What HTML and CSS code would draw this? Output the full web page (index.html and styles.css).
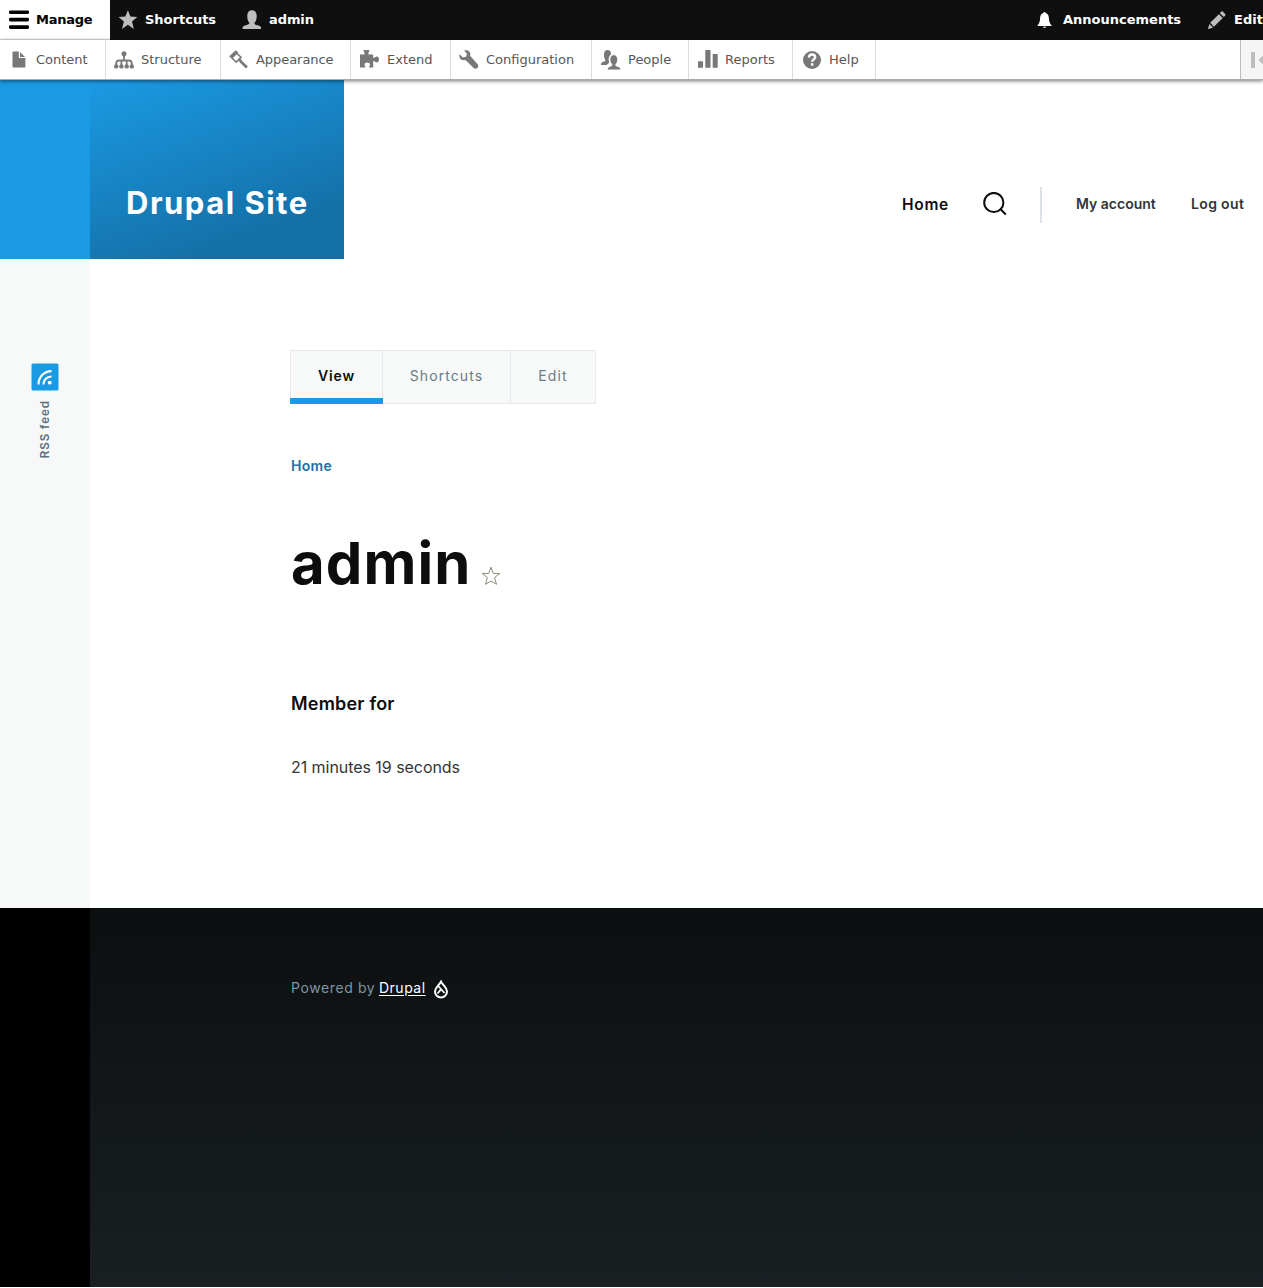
FILE: index.html
```html
<!DOCTYPE html>
<html lang="en">
<head>
<meta charset="utf-8">
<title>admin | Drupal Site</title>
<link rel="stylesheet" href="styles.css">
</head>
<body>
<nav class="bar">
  <a class="tab tab-manage"><svg width="20" height="20" viewBox="0 0 20 20"><g fill="#000"><rect y=".4" width="20" height="3.700" rx="1.4"/><rect y="7.800" width="20" height="3.700" rx="1.4"/><rect y="15.300" width="20" height="3.700" rx="1.4"/></g></svg><span>Manage</span></a>
  <a class="tab tab-shortcuts"><svg width="20" height="20" viewBox="0 0 20 20"><path fill="#bebebe" d="M9.900.3l2.500 6.300 6.900.4-5.300 4.400 1.800 7.600-5.900-4.200L4 19l1.900-7.600L.6 7l6.800-.4z"/></svg><span>Shortcuts</span></a>
  <a class="tab tab-user"><svg width="20" height="20" viewBox="0 0 20 20"><path fill="#bebebe" d="M.5 19c0-2.600.8-3.300 3.400-3.800 2.500-.5 3.600-1.100 3.400-2.400C5.800 11.500 5.300 9 5.300 6c0-3.600 1.700-5.700 4.700-5.700s4.700 2.100 4.700 5.700c0 3-.7 5.500-2.200 6.800-.2 1.300.7 1.900 3.100 2.400 2.600.5 3.500 1.200 3.600 3.800z"/></svg><span>admin</span></a>
  <a class="tab tab-news"><svg width="16" height="20" viewBox="0 0 16 20"><path fill="#fff" d="M7.500 2c.7 0 1.100.4 1.200 1 2.100.6 3.100 2.300 3.200 5 .1 3.500 1 5.800 3 8H.2c2-2.200 2.800-4.500 2.900-8 .1-2.700 1.100-4.400 3.200-5 .1-.6.5-1 1.200-1zM5.800 16.800h3.500c-.3.800-.9 1.100-1.700 1.100s-1.500-.3-1.800-1.100z"/></svg><span>Announcements</span></a>
  <a class="tab tab-edit"><svg width="18" height="20" viewBox="0 0 18 20"><path fill="#bebebe" d="M13.200 1.800c.6-.6 1.200-.6 1.800 0l2.100 2.200c.6.600.6 1.200 0 1.800l-1.300 1.300L11.900 3.200zM10.900 4.200l3.900 3.900-8.900 8.600-3.700-3.900zM1.500 13.900l3.500 3.500-4.200 1.500c-.5.100-.8-.2-.7-.7z"/></svg><span>Edit</span></a>
</nav>
<nav class="tray">
  <a class="item"><svg viewBox="0 0 20 20"><path d="M5.200 1.500h5.600v6c0 .4.200.600.600.600h6v8.700q0 .7-.7.700H5.200q-.7 0-.7-.7V2.200q0-.7.700-.7zM12 2l5 5h-4.500q-.5 0-.5-.5z"/></svg><span>Content</span></a>
  <a class="item"><svg viewBox="0 0 20 20"><circle cx="10" cy="3.700" r="2.500"/><circle cx="2.200" cy="16.400" r="2.200"/><circle cx="7.400" cy="16.400" r="2.200"/><circle cx="12.700" cy="16.400" r="2.200"/><circle cx="17.800" cy="16.400" r="2.200"/><path fill="none" stroke="#787878" stroke-width="1.800" d="M10 5v5M2.200 16v-2.500q0-3 3-3h9.600q3 0 3 3V16M7.400 16v-5M12.700 16v-5"/></svg><span>Structure</span></a>
  <a class="item"><svg viewBox="0 0 20 20"><path fill-rule="evenodd" d="M6.800.3l2.600 2.300-.6.700 4.300 4-5.900 5.900L.2 6.300zM7.600 4.300L4 8l3.200 3L10.900 7.300z"/><path d="M9.300 10.200l2.200-2 1.200 2.200 6.200 6.200-2 2-6-6.100z"/></svg><span>Appearance</span></a>
  <a class="item"><svg viewBox="0 0 20 20"><path d="M4.500 0h6c.3 1.300-1.300 1.700-1 3v1.600h4.700V8c1.500.2 1.900-1.500 3.600-1.500 1.300 0 2.200 1.300 2.200 2.900S19.100 12.400 17.800 12.400c-1.700 0-2.100-1.700-3.600-1.400v6.500h-4c-.5-1 .8-1.500.8-3 0-1.200-1.200-2.100-2.800-2.100s-2.700.9-2.700 2.100c0 1.500 1.300 2 .8 3H1V4.600h4.400V3c.3-1.300-1.200-1.700-.9-3z"/></svg><span>Extend</span></a>
  <a class="item"><svg viewBox="0 0 20 20"><path d="M5.200.6c3.600-1.500 7.400 1.600 5.900 5.200l7.400 8.200c2.400 2.700-1.100 6.300-3.900 3.900L6.500 9.900C3 11.300-.7 8.300.500 4.300l3.400 3.200 3.200-.7.800-3z"/></svg><span>Configuration</span></a>
  <a class="item"><svg viewBox="0 0 20 20"><path d="M1 15c0-2.500 1-3 3-3.500 1.500-.4 1.600-1 1.200-2C4.400 8.500 4 7 4 5c0-3.300 1-5 3.500-5s3.700 1.600 3.500 4.300C8.600 6 8.200 9.200 9.100 11.700l-.2 1.300L6.500 15z"/><path stroke="#fff" stroke-width=".8" d="M7.300 19.900c0-2.300.9-3.200 3.500-3.700 1.400-.3 1.400-1.200.8-2.200-1-1-1.700-2.500-1.700-4.200 0-3 1.400-5 3.900-5s3.900 2 3.900 5c0 1.700-.7 3.200-1.700 4.200-.5 1-.5 1.900.9 2.200 2.600.5 3.800 1.400 3.800 3.700z"/></svg><span>People</span></a>
  <a class="item"><svg viewBox="0 0 20 20"><rect x="1" y="11.300" width="5" height="6.500" rx=".5"/><rect x="8.300" y="0" width="5.200" height="17.800" rx=".5"/><rect x="15.700" y="4" width="5" height="13.800" rx=".5"/></svg><span>Reports</span></a>
  <a class="item"><svg viewBox="0 0 20 20"><circle cx="11" cy="10" r="9"/><path fill="none" stroke="#fff" stroke-width="2.400" d="M7.900 7.600C8 5.600 9.300 4.500 11 4.500s3.200 1 3.200 2.700c0 2.200-3 2.200-3 4.600"/><rect x="9.900" y="13.200" width="2.500" height="2.500" fill="#fff"/></svg><span>Help</span></a>
  <button class="orient" aria-label="Toggle orientation"><svg width="22" height="20" viewBox="0 0 22 20"><path fill="#bebebe" d="M0 2h4v16H0zM7.500 10L14 3.500v4h8v5h-8v4z"/></svg></button>
</nav>
<header class="header">
  <div class="edge"></div>
  <a class="brand"><span>Drupal Site</span></a>
  <nav class="nav">
    <a class="nav-home">Home</a>
    <svg class="search" width="24" height="24" viewBox="0 0 24 24"><g fill="none" stroke="#0d0d0d" stroke-width="2"><circle cx="10.800" cy="10.500" r="9.600"/><path d="M17.600 17.300l5.200 5.200"/></g></svg>
    <i class="rule"></i>
    <a class="nav-account">My account</a>
    <a class="nav-logout">Log out</a>
  </nav>
</header>
<div class="body">
  <aside class="social">
    <svg width="28" height="28" viewBox="0 0 28 28"><rect x=".5" y=".5" width="27" height="27" rx="1.500" fill="#1b9ae4"/><g fill="none" stroke="#fff" stroke-width="2.200"><path d="M7.500 21.500C7.500 14 13 8.300 20.500 8.200M12.500 21.500c0-4.500 3.500-8 8-8"/></g><circle cx="18.700" cy="19.700" r="1.900" fill="#fff"/></svg>
    <span class="rss">RSS feed</span>
  </aside>
  <main class="main">
    <nav class="tabs"><a class="active">View</a><a>Shortcuts</a><a>Edit</a></nav>
    <a class="crumb">Home</a>
    <div class="title"><h1>admin</h1><svg width="20" height="20" viewBox="0 0 20 20"><path fill="none" stroke="#8d8b78" stroke-width="1" stroke-linejoin="round" d="M10 1.200l2.200 6.200 6.500.1-5.100 4 1.900 6.800-5.500-3.300-5.500 3.300 1.900-6.800-5.100-4 6.500-.1z"/></svg></div>
    <h2>Member for</h2>
    <p>21 minutes 19 seconds</p>
  </main>
</div>
<footer class="footer">
  <div class="footer-edge"></div>
  <div class="powered"><span class="by">Powered by</span><a>Drupal</a><svg width="14" height="19" viewBox="0 0 14 19"><g fill="none" stroke="#fff" stroke-width="2"><path d="M7 1.600C7.800 3.300 8.900 4.400 10 5.600 11.800 7.500 13 9 13 11.500 13 15 10.300 17.500 7 17.500S1 15 1 11.500C1 9 2.200 7.500 4 5.600 5.100 4.400 6.200 3.300 7 1.600z"/><path stroke-width="1.800" d="M4.200 6l6.300 7M7.300 9.200l-3.800 4.300"/></g></svg></div>
</footer>
</body>
</html>
```

FILE: styles.css
```css
* { box-sizing: border-box; }
body { margin: 0; background: #fff; font-family: Inter, "Liberation Sans", sans-serif; color: #0d0d0e; overflow: hidden; }
svg { display: block; flex: none; }
span, a { white-space: nowrap; }
.bar { display: flex; height: 40px; background: #0f0f0f; color: #fff; font: bold 13px/18px "DejaVu Sans", sans-serif; letter-spacing: 0; overflow: hidden; }
.tab { display: flex; align-items: center; flex: none; height: 39px; }
.tab-manage { width: 110px; height: 40px; padding: 0 0 0 9px; gap: 7px; background: #fff; color: #000; border-bottom: 1px solid #ddd; letter-spacing: -0.25px; }
.tab-shortcuts { width: 124px; padding-left: 8px; gap: 7px; }
.tab-user { padding-left: 8px; gap: 7px; letter-spacing: -0.1px; }
.tab-news { width: 171px; margin-left: auto; gap: 10px; }
.tab-edit { width: 55px; gap: 8px; }
.tray { position: relative; z-index: 1; display: flex; height: 40px; background: #fff; border-bottom: 1px solid #aaa; box-shadow: 0 1px 4px rgba(0,0,0,.55); font: 13px/18px "DejaVu Sans", sans-serif; color: #565656; overflow: visible; }
.item { display: flex; align-items: center; gap: 8px; width: 115px; padding-left: 8px; border-right: 1px solid #ddd; }
.item svg { width: 20px; height: 20px; fill: #787878; overflow: visible; }
.item:nth-child(1) { width: 106px; }
.item:nth-child(2), .item:nth-child(3) { gap: 7px; }
.item:nth-child(3) { width: 130px; }
.item:nth-child(3) span { letter-spacing: -0.05px; }
.item:nth-child(4) { width: 100px; }
.item:nth-child(5) { width: 141px; gap: 7px; }
.item:nth-child(6) { width: 97px; }
.item:nth-child(7) { width: 104px; }
.item:nth-child(8) { width: 83px; }
.orient { width: 23px; margin-left: auto; padding: 0 0 0 10px; border: 0; border-left: 1px solid #bbb; background: #f5f5f5; overflow: hidden; }
.header { display: flex; height: 179px; }
.edge { width: 90px; background: #1b9ae4; }
.brand { display: flex; align-items: center; width: 254px; padding: 65px 0 0 36px; background: linear-gradient(160deg, #1b9ae4 0%, #1471a8 78.66%); color: #fff; font-size: 31px; font-weight: 700; letter-spacing: 1.5px; }
.nav { display: flex; align-items: center; margin-left: auto; padding: 69px 0 0; height: 179px; }
.nav-home { width: 81px; padding-top: 1px; font-size: 15.500px; font-weight: 600; letter-spacing: .7px; }
.search { margin-right: 33px; }
.rule { width: 2px; height: 36px; margin: 1px 34px 0 0; background: #dce2e7; }
.nav-account, .nav-logout { width: 115px; padding-bottom: 1px; font-size: 14px; font-weight: 600; color: #2f353a; }
.nav-logout { width: 72px; letter-spacing: .35px; }
.body { display: flex; height: 649px; }
.social { display: flex; flex-direction: column; align-items: center; gap: 9px; width: 90px; padding-top: 104px; background: #f7f9f9; }
.rss { writing-mode: vertical-rl; transform: rotate(180deg); font-size: 11.500px; line-height: 14px; font-weight: 600; letter-spacing: 1px; color: #5c6f7b; }
.main { display: flex; flex-direction: column; align-items: flex-start; padding: 91px 0 0 290px; margin-left: -90px; }
.tabs { display: flex; height: 54px; border: 1px solid #e7eaed; background: #f7f9f9; color: #6b7b85; font-size: 14px; line-height: 50px; letter-spacing: 1.1px; text-align: center; }
.tabs a { width: 128px; border-right: 1px solid #e7eaed; }
.tabs a.active { width: 93px; height: 54px; margin: -1px 0 0 -1px; border-bottom: 6px solid #1b9ae4; border-right: 0; color: #0d0d0e; font-weight: 600; letter-spacing: .8px; line-height: 52px; box-shadow: inset -1px 0 #e7eaed; }
.tabs a:last-child { width: 84px; border: 0; }
.crumb { margin: 53px 0 0 1px; font-size: 14px; line-height: 18px; font-weight: 600; letter-spacing: .3px; color: #2070a5; }
.title { display: flex; align-items: flex-end; gap: 9px; height: 72px; margin: 52px 0 0 1px; }
.title svg { margin-bottom: 13px; }
h1 { margin: 0; font-size: 58px; line-height: 72px; font-weight: 700; letter-spacing: 1.1px; }
h2 { margin: 91px 0 0 1px; font-size: 18px; line-height: 28px; font-weight: 600; letter-spacing: .2px; }
p { margin: 35px 0 0 1px; font-size: 16px; line-height: 28px; letter-spacing: -.05px; color: #313637; }
.footer { display: flex; height: 379px; background: linear-gradient(180deg, #0c0f10, #191f22); }
.footer-edge { width: 90px; background: #000; }
.powered { display: flex; align-items: flex-start; padding: 71px 0 0 201px; font-size: 14px; line-height: 18px; color: #7e96a3; }
.powered .by { width: 88px; letter-spacing: .6px; }
.powered a { color: #fff; letter-spacing: .5px; text-decoration: underline; text-underline-offset: 2px; }
.powered svg { margin: 1px 0 0 8px; }
```
